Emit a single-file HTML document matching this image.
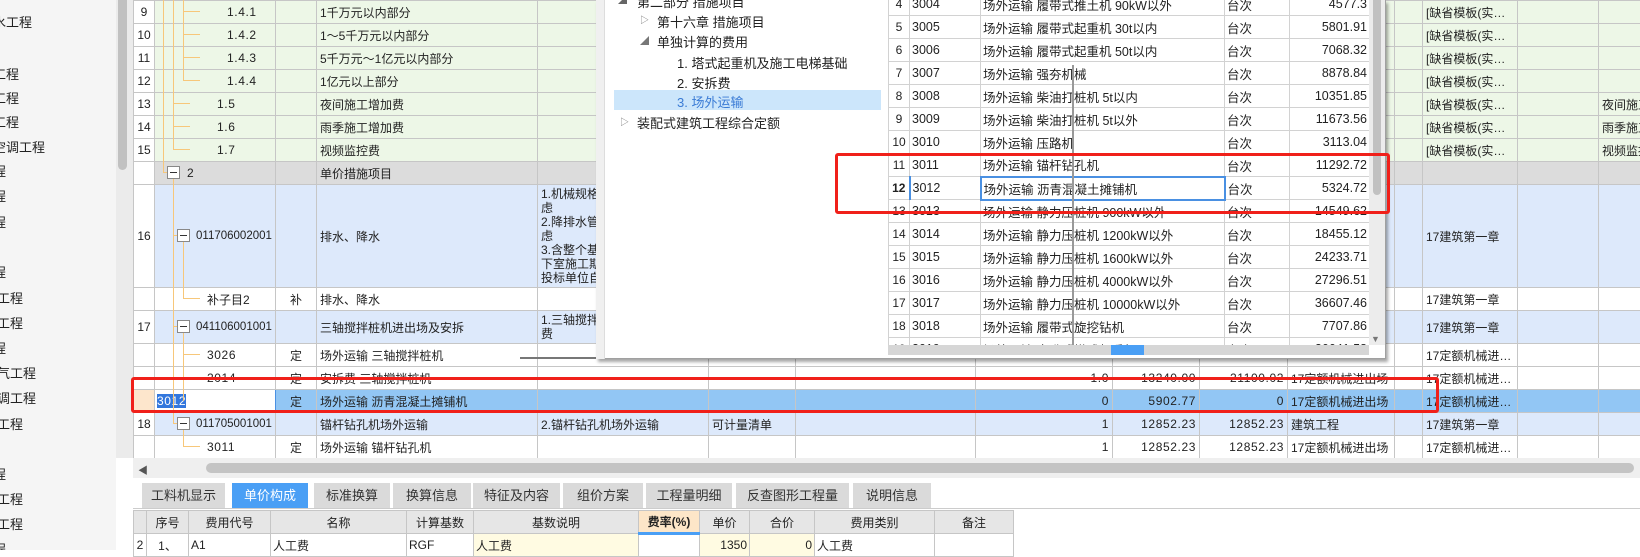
<!DOCTYPE html>
<html><head><meta charset="utf-8"><style>
*{box-sizing:border-box;margin:0;padding:0}
body{width:1640px;height:550px;overflow:hidden;background:#fff;font-family:"Liberation Sans","Noto Sans CJK SC",sans-serif;font-size:12px;color:#222;position:relative}
.a{position:absolute}
#side{left:0;top:0;width:116px;height:550px;background:#f5f5f5;overflow:hidden}
#side div{position:absolute;font-size:13px;white-space:nowrap}
#sb{left:116px;top:0;width:17px;height:458px;background:#ebebeb}
table{border-collapse:collapse;table-layout:fixed}
#mg{left:133px;top:0;width:1507px}
#mg td{border:1px solid #c6c6c6;white-space:nowrap;overflow:hidden;padding:0 3px;vertical-align:middle;height:23px}
.g td{background:#edf7e7}
.gr td{background:#dcdcdc}
.b td{background:#dde9fb}
.s td{background:#92c6f4}
.w td{background:#fff}
td.n{text-align:center;background:#fff!important;padding:0}
td.r{text-align:right}
.mono{font-family:"Liberation Sans",sans-serif;font-size:12px;letter-spacing:0.6px}
.lc{letter-spacing:0;font-size:11.5px;padding-right:0!important}
.ln{position:absolute;background:#f7c77a}
.bx{position:absolute;width:13px;height:13px;border:1px solid #888;background:#fff}
.bx:after{content:"";position:absolute;left:2px;right:2px;top:5px;height:1px;background:#333}
#pop{left:596px;top:0;width:790px;height:359px;background:#fff;border:1px solid #a0a0a0;border-top:none;box-shadow:2px 3px 3px rgba(0,0,0,.35)}
#pg{left:888px;top:0;width:481px;height:345px;overflow:hidden}
#pg table{margin-top:-8px;width:481px}
#pg td{border:1px solid #d2d2d2;height:23px;white-space:nowrap;overflow:hidden;padding:0 2px;font-size:12.5px}
#pg td.n{text-align:center;font-size:12px}
.tr{position:absolute;font-size:13px;white-space:nowrap}
.red{position:absolute;border:3px solid #f0201a;border-radius:3px}
.tab{position:absolute;top:483px;height:25px;background:#dadada;text-align:center;line-height:25px;font-size:13px;color:#333}
#bt{left:133px;top:510px;width:880px}
#bt td{border:1px solid #c6c6c6;height:23px;white-space:nowrap;overflow:hidden;padding:0 2px;text-align:center}
</style></head><body>

<div id="side" class="a">
<div style="left:-20px;top:12px">排水工程</div>
<div style="left:-7px;top:64px">工程</div>
<div style="left:-7px;top:88px">工程</div>
<div style="left:-7px;top:112px">工程</div>
<div style="left:-7px;top:137px">空调工程</div>
<div style="left:-7px;top:161px">程</div>
<div style="left:-7px;top:186px">程</div>
<div style="left:-7px;top:212px">程</div>
<div style="left:-7px;top:262px">程</div>
<div style="left:-3px;top:288px">工程</div>
<div style="left:-3px;top:313px">工程</div>
<div style="left:-7px;top:338px">程</div>
<div style="left:-3px;top:363px">气工程</div>
<div style="left:-3px;top:388px">调工程</div>
<div style="left:-3px;top:414px">工程</div>
<div style="left:-7px;top:464px">程</div>
<div style="left:-3px;top:489px">工程</div>
<div style="left:-3px;top:514px">工程</div>
<div style="left:-7px;top:539px">程</div>
</div>
<div id="sb" class="a"><div class="a" style="left:2px;top:0;width:9px;height:170px;background:#c1c1c1;border-radius:0 0 5px 5px"></div></div>

<table id="mg" class="a">
<colgroup><col style="width:21px"><col style="width:121px"><col style="width:41px"><col style="width:221px"><col style="width:171px"><col style="width:87px"><col style="width:180px"><col style="width:137px"><col style="width:87px"><col style="width:88px"><col style="width:107px"><col style="width:28px"><col style="width:95px"><col style="width:81px"><col style="width:42px"></colgroup>
<tr class="g"><td class="n">9</td><td class="mono" style="padding-left:72px">1.4.1</td><td></td><td>1千万元以内部分</td><td></td><td></td><td></td><td></td><td></td><td></td><td></td><td></td><td>[缺省模板(实…</td><td></td><td></td></tr>
<tr class="g"><td class="n">10</td><td class="mono" style="padding-left:72px">1.4.2</td><td></td><td>1～5千万元以内部分</td><td></td><td></td><td></td><td></td><td></td><td></td><td></td><td></td><td>[缺省模板(实…</td><td></td><td></td></tr>
<tr class="g"><td class="n">11</td><td class="mono" style="padding-left:72px">1.4.3</td><td></td><td>5千万元～1亿元以内部分</td><td></td><td></td><td></td><td></td><td></td><td></td><td></td><td></td><td>[缺省模板(实…</td><td></td><td></td></tr>
<tr class="g"><td class="n">12</td><td class="mono" style="padding-left:72px">1.4.4</td><td></td><td>1亿元以上部分</td><td></td><td></td><td></td><td></td><td></td><td></td><td></td><td></td><td>[缺省模板(实…</td><td></td><td></td></tr>
<tr class="g"><td class="n">13</td><td class="mono" style="padding-left:62px">1.5</td><td></td><td>夜间施工增加费</td><td></td><td></td><td></td><td></td><td></td><td></td><td></td><td></td><td>[缺省模板(实…</td><td></td><td>夜间施工</td></tr>
<tr class="g"><td class="n">14</td><td class="mono" style="padding-left:62px">1.6</td><td></td><td>雨季施工增加费</td><td></td><td></td><td></td><td></td><td></td><td></td><td></td><td></td><td>[缺省模板(实…</td><td></td><td>雨季施工</td></tr>
<tr class="g"><td class="n">15</td><td class="mono" style="padding-left:62px">1.7</td><td></td><td>视频监控费</td><td></td><td></td><td></td><td></td><td></td><td></td><td></td><td></td><td>[缺省模板(实…</td><td></td><td>视频监控</td></tr>
<tr class="gr"><td class="n"></td><td class="mono" style="padding-left:32px">2</td><td></td><td>单价措施项目</td><td></td><td></td><td></td><td></td><td></td><td></td><td></td><td></td><td></td><td></td><td></td></tr>
<tr class="b"><td class="n" style="height:103px">16</td><td class="mono lc" style="padding-left:41px">011706002001</td><td></td><td>排水、降水</td><td style="white-space:normal;line-height:14px;vertical-align:top;padding-top:2px">1.机械规格<br>虑<br>2.降排水管<br>虑<br>3.含整个基<br>下室施工期<br>投标单位自</td><td></td><td></td><td></td><td></td><td></td><td></td><td></td><td>17建筑第一章</td><td></td><td></td></tr>
<tr class="w"><td class="n"></td><td style="padding-left:52px">补子目2</td><td style="text-align:center">补</td><td>排水、降水</td><td></td><td></td><td></td><td></td><td></td><td></td><td></td><td></td><td>17建筑第一章</td><td></td><td></td></tr>
<tr class="b"><td class="n" style="height:33px">17</td><td class="mono lc" style="padding-left:41px">041106001001</td><td></td><td>三轴搅拌桩机进出场及安拆</td><td style="white-space:normal;line-height:14px">1.三轴搅拌<br>费</td><td></td><td></td><td></td><td></td><td></td><td></td><td></td><td>17建筑第一章</td><td></td><td></td></tr>
<tr class="w"><td class="n"></td><td class="mono" style="padding-left:52px">3026</td><td style="text-align:center">定</td><td>场外运输 三轴搅拌桩机</td><td></td><td></td><td></td><td></td><td></td><td></td><td></td><td></td><td>17定额机械进…</td><td></td><td></td></tr>
<tr class="w"><td class="n"></td><td class="mono" style="padding-left:52px">2014</td><td style="text-align:center">定</td><td>安拆费 三轴搅拌桩机</td><td></td><td></td><td></td><td class="r mono">1.0</td><td class="r mono">13240.00</td><td class="r mono">21100.02</td><td>17定额机械进出场</td><td></td><td>17定额机械进…</td><td></td><td></td></tr>
<tr class="s"><td class="n" style="background:#fde6cc!important"></td><td style="background:#fff;border:1px solid #4a90e2;padding-left:2px"><span class="mono" style="background:#3377dd;color:#fff">3012</span></td><td style="text-align:center">定</td><td>场外运输 沥青混凝土摊铺机</td><td></td><td></td><td></td><td class="r mono">0</td><td class="r mono">5902.77</td><td class="r mono">0</td><td>17定额机械进出场</td><td></td><td>17定额机械进…</td><td></td><td></td></tr>
<tr class="b"><td class="n">18</td><td class="mono lc" style="padding-left:41px">011705001001</td><td></td><td>锚杆钻孔机场外运输</td><td>2.锚杆钻孔机场外运输</td><td>可计量清单</td><td></td><td class="r mono">1</td><td class="r mono">12852.23</td><td class="r mono">12852.23</td><td>建筑工程</td><td></td><td>17建筑第一章</td><td></td><td></td></tr>
<tr class="w"><td class="n"></td><td class="mono" style="padding-left:52px">3011</td><td style="text-align:center">定</td><td>场外运输 锚杆钻孔机</td><td></td><td></td><td></td><td class="r mono">1</td><td class="r mono">12852.23</td><td class="r mono">12852.23</td><td>17定额机械进出场</td><td></td><td>17定额机械进…</td><td></td><td></td></tr>
</table>

<div class="ln" style="left:163px;top:0;width:1px;height:173px"></div>
<div class="ln" style="left:163px;top:172px;width:5px;height:1px"></div>
<div class="ln" style="left:173px;top:0;width:1px;height:150px"></div>
<div class="ln" style="left:173px;top:103px;width:17px;height:1px"></div>
<div class="ln" style="left:173px;top:126px;width:17px;height:1px"></div>
<div class="ln" style="left:173px;top:149px;width:17px;height:1px"></div>
<div class="ln" style="left:183px;top:0;width:1px;height:81px"></div>
<div class="ln" style="left:183px;top:11px;width:17px;height:1px"></div>
<div class="ln" style="left:183px;top:34px;width:17px;height:1px"></div>
<div class="ln" style="left:183px;top:57px;width:17px;height:1px"></div>
<div class="ln" style="left:183px;top:80px;width:17px;height:1px"></div>
<div class="ln" style="left:173px;top:179px;width:1px;height:245px"></div>
<div class="ln" style="left:173px;top:235px;width:5px;height:1px"></div>
<div class="ln" style="left:173px;top:326px;width:5px;height:1px"></div>
<div class="ln" style="left:173px;top:423px;width:5px;height:1px"></div>
<div class="ln" style="left:183px;top:242px;width:1px;height:57px"></div>
<div class="ln" style="left:183px;top:298px;width:17px;height:1px"></div>
<div class="ln" style="left:183px;top:333px;width:1px;height:68px"></div>
<div class="ln" style="left:183px;top:354px;width:17px;height:1px"></div>
<div class="ln" style="left:183px;top:377px;width:17px;height:1px"></div>
<div class="ln" style="left:183px;top:430px;width:1px;height:17px"></div>
<div class="ln" style="left:183px;top:446px;width:17px;height:1px"></div>
<div class="bx" style="left:167px;top:166px"></div>
<div class="bx" style="left:177px;top:229px"></div>
<div class="bx" style="left:177px;top:320px"></div>
<div class="bx" style="left:177px;top:417px"></div>

<div class="a" style="left:520px;top:357px;width:76px;height:2px;background:#777"></div>

<div id="pop" class="a"></div>
<div class="a" style="left:596px;top:0;width:9px;height:359px;background:#f0f0f0;border-right:1px solid #ddd"></div>
<div class="tr" style="left:618px;top:-7px;font-size:9px;color:#666">◢</div>
<div class="tr" style="left:637px;top:-8px">第二部分 措施项目</div>
<div class="tr" style="left:640px;top:13px;font-size:9px;color:#777">▷</div>
<div class="tr" style="left:657px;top:12px">第十六章 措施项目</div>
<div class="tr" style="left:640px;top:34px;font-size:9px;color:#777">◢</div>
<div class="tr" style="left:657px;top:32px">单独计算的费用</div>
<div class="tr" style="left:677px;top:53px">1. 塔式起重机及施工电梯基础</div>
<div class="tr" style="left:677px;top:73px">2. 安拆费</div>
<div class="a" style="left:614px;top:90px;width:267px;height:20px;background:#cce6fb"></div>
<div class="tr" style="left:677px;top:92px;color:#3a7bd5">3. 场外运输</div>
<div class="tr" style="left:620px;top:115px;font-size:9px;color:#777">▷</div>
<div class="tr" style="left:637px;top:113px">装配式建筑工程综合定额</div>

<div id="pg" class="a"><table>
<colgroup><col style="width:21px"><col style="width:71px"><col style="width:244px"><col style="width:65px"><col style="width:80px"></colgroup>
<tr><td class="n">4</td><td>3004</td><td>场外运输 履带式推土机 90kW以外</td><td>台次</td><td class="r">4577.3</td></tr>
<tr><td class="n">5</td><td>3005</td><td>场外运输 履带式起重机 30t以内</td><td>台次</td><td class="r">5801.91</td></tr>
<tr><td class="n">6</td><td>3006</td><td>场外运输 履带式起重机 50t以内</td><td>台次</td><td class="r">7068.32</td></tr>
<tr><td class="n">7</td><td>3007</td><td>场外运输 强夯机械</td><td>台次</td><td class="r">8878.84</td></tr>
<tr><td class="n">8</td><td>3008</td><td>场外运输 柴油打桩机 5t以内</td><td>台次</td><td class="r">10351.85</td></tr>
<tr><td class="n">9</td><td>3009</td><td>场外运输 柴油打桩机 5t以外</td><td>台次</td><td class="r">11673.56</td></tr>
<tr><td class="n">10</td><td>3010</td><td>场外运输 压路机</td><td>台次</td><td class="r">3113.04</td></tr>
<tr><td class="n">11</td><td>3011</td><td>场外运输 锚杆钻孔机</td><td>台次</td><td class="r">11292.72</td></tr>
<tr><td class="n" style="background:#fde3c4;font-weight:bold;border-right:2px solid #4a90e2">12</td><td>3012</td><td style="border:2px solid #4a90e2">场外运输 沥青混凝土摊铺机</td><td>台次</td><td class="r">5324.72</td></tr>
<tr><td class="n">13</td><td>3013</td><td>场外运输 静力压桩机 900kW以外</td><td>台次</td><td class="r">14549.62</td></tr>
<tr><td class="n">14</td><td>3014</td><td>场外运输 静力压桩机 1200kW以外</td><td>台次</td><td class="r">18455.12</td></tr>
<tr><td class="n">15</td><td>3015</td><td>场外运输 静力压桩机 1600kW以外</td><td>台次</td><td class="r">24233.71</td></tr>
<tr><td class="n">16</td><td>3016</td><td>场外运输 静力压桩机 4000kW以外</td><td>台次</td><td class="r">27296.51</td></tr>
<tr><td class="n">17</td><td>3017</td><td>场外运输 静力压桩机 10000kW以外</td><td>台次</td><td class="r">36607.46</td></tr>
<tr><td class="n">18</td><td>3018</td><td>场外运输 履带式旋挖钻机</td><td>台次</td><td class="r">7707.86</td></tr>
<tr><td class="n">19</td><td>3019</td><td>场外运输 自升式塔式起重机</td><td>台次</td><td class="r">26641.58</td></tr>
</table></div>
<div class="a" style="left:1072px;top:65px;width:2px;height:285px;background:#999"></div>
<div class="a" style="left:1369px;top:0;width:16px;height:345px;background:#ececec"></div>
<div class="a" style="left:1373px;top:0;width:8px;height:195px;background:#c1c1c1;border-radius:0 0 4px 4px"></div>
<div class="a" style="left:1371px;top:334px;font-size:9px;color:#777">▼</div>
<div class="a" style="left:888px;top:345px;width:481px;height:10px;background:#d6d6d6"></div>
<div class="a" style="left:1111px;top:345px;width:33px;height:10px;background:#4a9ff5"></div>

<div class="red" style="left:835px;top:153px;width:555px;height:61px"></div>
<div class="red" style="left:131px;top:377px;width:1308px;height:36px"></div>

<div class="a" style="left:133px;top:458px;width:1507px;height:20px;background:#efefef"></div>
<div class="a" style="left:138px;top:462px;font-size:10px;color:#555">◀</div>
<div class="a" style="left:206px;top:463px;width:1428px;height:10px;background:#c4c4c4;border-radius:5px"></div>
<div class="a" style="left:133px;top:478px;width:1507px;height:72px;background:#fff"></div>
<div class="a" style="left:133px;top:508px;width:1507px;height:1px;background:#ccc"></div>
<div class="tab" style="left:142px;width:83px">工料机显示</div>
<div class="tab" style="left:232px;width:76px;background:#4a9ff5;color:#fff">单价构成</div>
<div class="tab" style="left:314px;width:76px">标准换算</div>
<div class="tab" style="left:393px;width:78px">换算信息</div>
<div class="tab" style="left:473px;width:87px">特征及内容</div>
<div class="tab" style="left:563px;width:80px">组价方案</div>
<div class="tab" style="left:646px;width:86px">工程量明细</div>
<div class="tab" style="left:736px;width:113px">反查图形工程量</div>
<div class="tab" style="left:853px;width:78px">说明信息</div>

<table id="bt" class="a">
<colgroup><col style="width:13px"><col style="width:42px"><col style="width:82px"><col style="width:136px"><col style="width:67px"><col style="width:165px"><col style="width:61px"><col style="width:50px"><col style="width:65px"><col style="width:120px"><col style="width:79px"></colgroup>
<tr style="background:#e6e6e6"><td></td><td>序号</td><td>费用代号</td><td>名称</td><td>计算基数</td><td>基数说明</td><td style="background:#fde6c8;border-bottom:3px solid #4a9ff5;font-weight:bold">费率(%)</td><td>单价</td><td>合价</td><td>费用类别</td><td>备注</td></tr>
<tr><td>2</td><td>1、</td><td style="text-align:left">A1</td><td style="text-align:left">人工费</td><td style="text-align:left">RGF</td><td style="text-align:left;background:#fffbe2">人工费</td><td></td><td style="text-align:right;background:#fffbe2">1350</td><td style="text-align:right;background:#fffbe2">0</td><td style="text-align:left">人工费</td><td></td></tr>
</table>
</body></html>
